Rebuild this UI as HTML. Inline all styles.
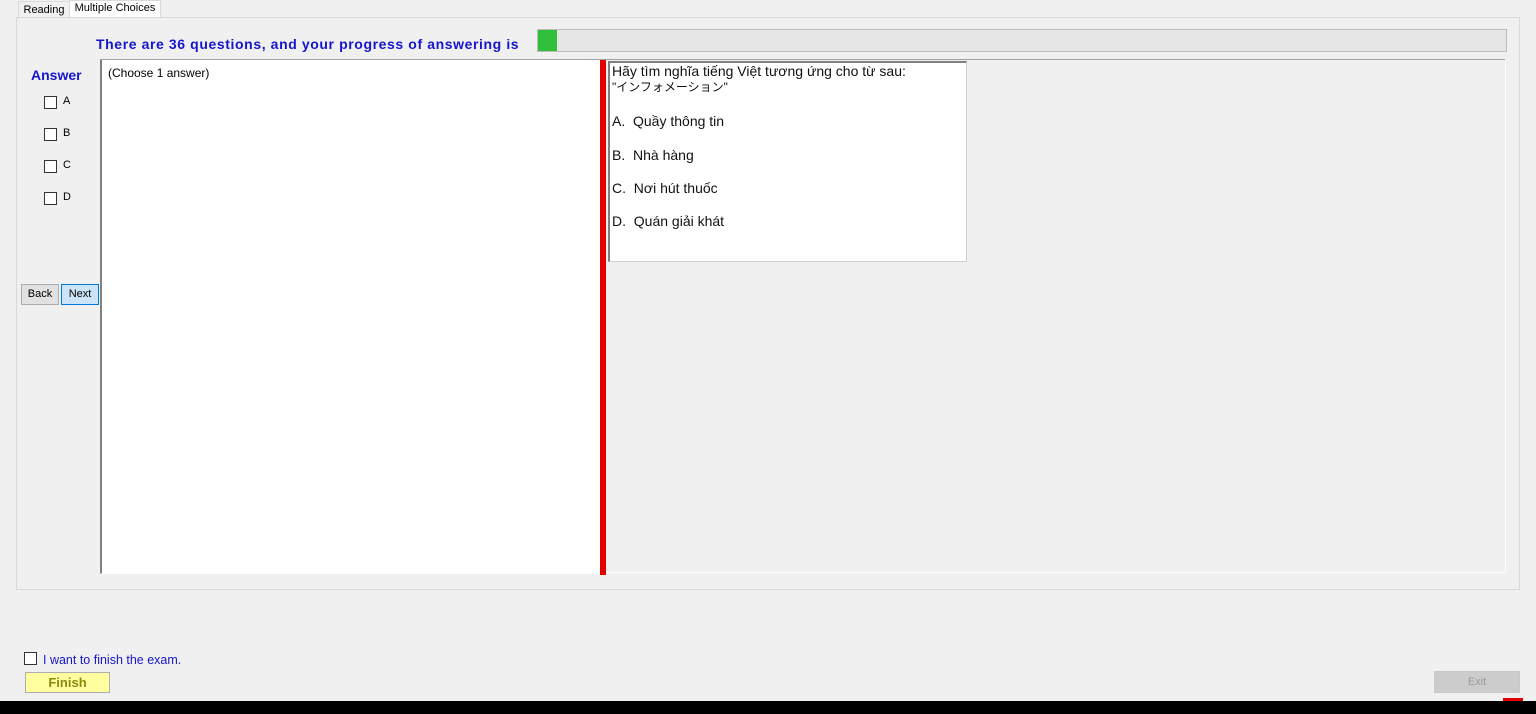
<!DOCTYPE html>
<html><head><meta charset="utf-8"><style>
body{margin:0;width:1536px;height:714px;background:#f0f0f0;position:relative;overflow:hidden;font-family:"Liberation Sans","Noto Sans CJK JP",sans-serif;font-size:12px;color:#000}
.a{position:absolute}
.cb{position:absolute;width:11px;height:11px;border:1px solid #333;background:#fff}
</style></head><body>
<div class="a" style="left:18px;top:1px;width:50px;height:16px;border:1px solid #d9d9d9;border-bottom:none;font-size:11px;line-height:16px;text-align:center;top:1px">Reading</div>
<div class="a" style="left:69px;top:0;width:90px;height:18px;border:1px solid #d9d9d9;border-bottom:none;background:#fff;font-size:11px;line-height:14px;text-align:center">Multiple Choices</div>
<div class="a" style="left:16px;top:17px;width:1502px;height:571px;border:1px solid #d9d9d9;background:#f0f0f0"></div>
<div class="a" style="left:96px;top:36px;font-weight:bold;font-size:14px;letter-spacing:0.6px;color:#1515d0">There are 36 questions, and your progress of answering is</div>
<div class="a" style="left:537px;top:29px;width:968px;height:21px;border:1px solid #bcbcbc;background:#e6e6e6"></div>
<div class="a" style="left:538px;top:30px;width:19px;height:21px;background:#2fbf3a"></div>
<div class="a" style="left:31px;top:67px;font-weight:bold;font-size:14px;color:#1515d0">Answer</div>
<div class="cb" style="left:44px;top:96px"></div><div class="a" style="left:63px;top:95px;font-size:11px">A</div>
<div class="cb" style="left:44px;top:128px"></div><div class="a" style="left:63px;top:127px;font-size:11px">B</div>
<div class="cb" style="left:44px;top:160px"></div><div class="a" style="left:63px;top:159px;font-size:11px">C</div>
<div class="cb" style="left:44px;top:192px"></div><div class="a" style="left:63px;top:191px;font-size:11px">D</div>
<div class="a" style="left:21px;top:284px;width:36px;height:19px;border:1px solid #adadad;background:#e1e1e1;font-size:11px;line-height:19px;text-align:center">Back</div>
<div class="a" style="left:61px;top:284px;width:36px;height:19px;border:1px solid #0078d7;background:#cce4f7;font-size:11px;line-height:19px;text-align:center">Next</div>
<div class="a" style="left:100px;top:59px;width:1405px;height:1px;background:#a0a0a0"></div>
<div class="a" style="left:100px;top:60px;width:498px;height:513px;border-left:2px solid #808080;border-bottom:1px solid #fff;background:#fff"></div>
<div class="a" style="left:108px;top:66px">(Choose 1 answer)</div>
<div class="a" style="left:600px;top:60px;width:6px;height:515px;background:#e00000"></div>
<div class="a" style="left:608px;top:61px;width:356px;height:198px;border:1px solid #d0d0d0;border-left:2px solid #808080;border-top:2px solid #808080;background:#fff;font-size:14px;color:#111">
<div style="position:absolute;left:2px;top:1px;line-height:15px">Hãy tìm nghĩa tiếng Việt tương ứng cho từ sau:<br><span style="font-size:12px">"インフォメーション"</span></div>
<div style="position:absolute;left:2px;top:50px">A.&nbsp; Quầy thông tin</div>
<div style="position:absolute;left:2px;top:84px">B.&nbsp; Nhà hàng</div>
<div style="position:absolute;left:2px;top:117px">C.&nbsp; Nơi hút thuốc</div>
<div style="position:absolute;left:2px;top:150px">D.&nbsp; Quán giải khát</div>
</div>
<div class="a" style="left:1505px;top:60px;width:1px;height:513px;background:#fff"></div>
<div class="a" style="left:606px;top:572px;width:900px;height:1px;background:#fff"></div>
<div class="cb" style="left:24px;top:652px"></div>
<div class="a" style="left:43px;top:653px;font-size:12.5px;color:#1515d0">I want to finish the exam.</div>
<div class="a" style="left:25px;top:672px;width:83px;height:19px;border:1px solid #adadad;background:#ffffa0;font-weight:bold;font-size:13px;line-height:19px;text-align:center;color:#8a8a10">Finish</div>
<div class="a" style="left:1434px;top:671px;width:84px;height:20px;border:1px solid #c8c8c8;background:#cccccc;font-size:11px;line-height:20px;text-align:center;color:#9a9a9a">Exit</div>
<div class="a" style="left:0;top:701px;width:1536px;height:13px;background:#000"></div>
<div class="a" style="left:1503px;top:698px;width:20px;height:3px;background:#e00000"></div>
</body></html>
